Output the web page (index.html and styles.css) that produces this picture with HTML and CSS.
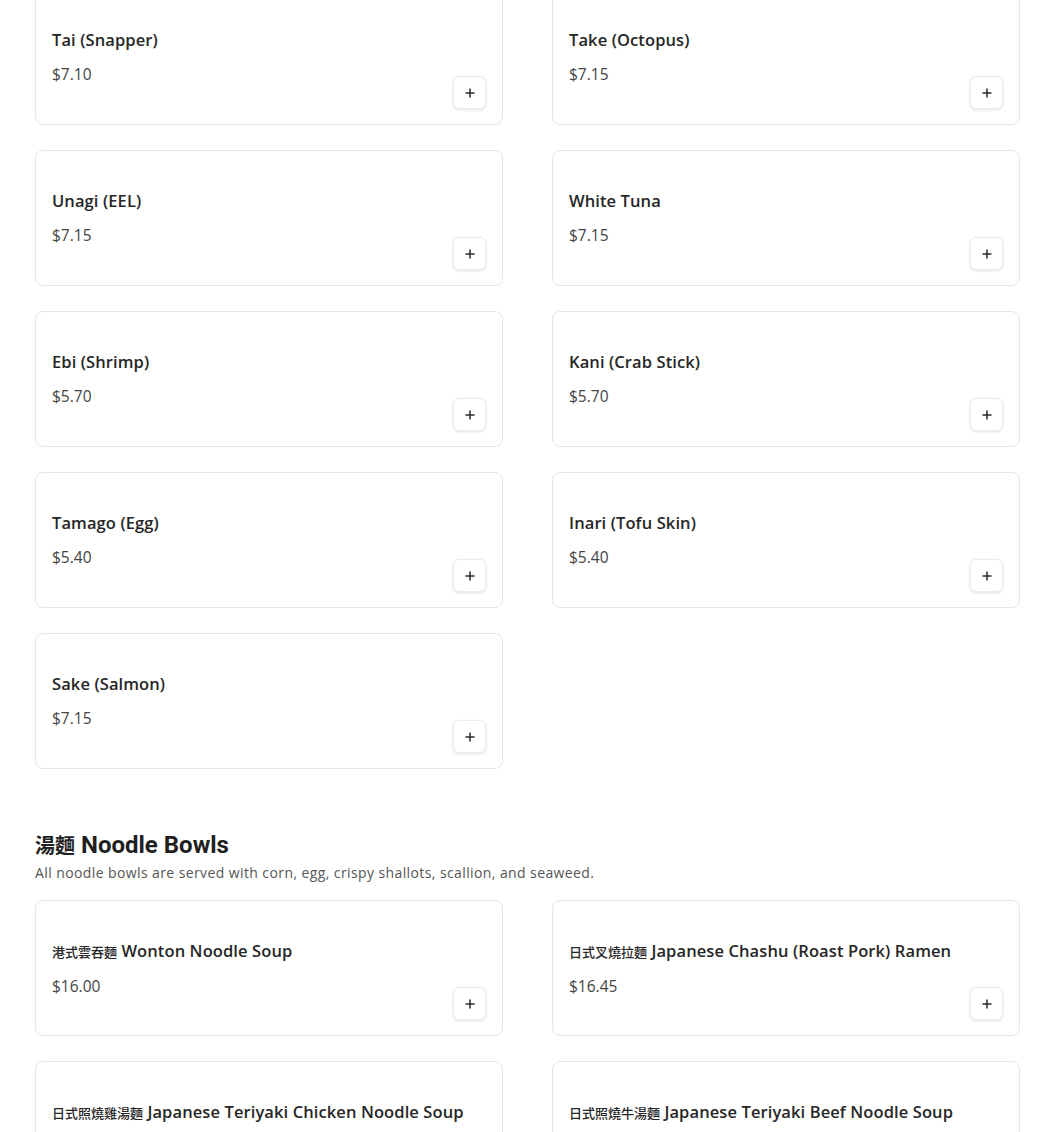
FILE: index.html
```html
<!DOCTYPE html>
<html lang="en">
<head>
<meta charset="utf-8">
<title>Menu</title>
<link rel="stylesheet" href="styles.css">
</head>
<body>
<main class="menu">
  <section class="section first">
    <div class="grid">
      <div class="card"><div class="info"><h3 class="name">Tai (Snapper)</h3><p class="price">$7.10</p></div><button class="add" aria-label="Add"><svg viewBox="0 0 12 12" width="12" height="12"><path d="M6 1.5v9M1.5 6h9" stroke="#2a2a2a" stroke-width="1.5" fill="none"/></svg></button></div>
      <div class="card"><div class="info"><h3 class="name">Take (Octopus)</h3><p class="price">$7.15</p></div><button class="add" aria-label="Add"><svg viewBox="0 0 12 12" width="12" height="12"><path d="M6 1.5v9M1.5 6h9" stroke="#2a2a2a" stroke-width="1.5" fill="none"/></svg></button></div>
      <div class="card"><div class="info"><h3 class="name">Unagi (EEL)</h3><p class="price">$7.15</p></div><button class="add" aria-label="Add"><svg viewBox="0 0 12 12" width="12" height="12"><path d="M6 1.5v9M1.5 6h9" stroke="#2a2a2a" stroke-width="1.5" fill="none"/></svg></button></div>
      <div class="card"><div class="info"><h3 class="name">White Tuna</h3><p class="price">$7.15</p></div><button class="add" aria-label="Add"><svg viewBox="0 0 12 12" width="12" height="12"><path d="M6 1.5v9M1.5 6h9" stroke="#2a2a2a" stroke-width="1.5" fill="none"/></svg></button></div>
      <div class="card"><div class="info"><h3 class="name">Ebi (Shrimp)</h3><p class="price">$5.70</p></div><button class="add" aria-label="Add"><svg viewBox="0 0 12 12" width="12" height="12"><path d="M6 1.5v9M1.5 6h9" stroke="#2a2a2a" stroke-width="1.5" fill="none"/></svg></button></div>
      <div class="card"><div class="info"><h3 class="name">Kani (Crab Stick)</h3><p class="price">$5.70</p></div><button class="add" aria-label="Add"><svg viewBox="0 0 12 12" width="12" height="12"><path d="M6 1.5v9M1.5 6h9" stroke="#2a2a2a" stroke-width="1.5" fill="none"/></svg></button></div>
      <div class="card"><div class="info"><h3 class="name">Tamago (Egg)</h3><p class="price">$5.40</p></div><button class="add" aria-label="Add"><svg viewBox="0 0 12 12" width="12" height="12"><path d="M6 1.5v9M1.5 6h9" stroke="#2a2a2a" stroke-width="1.5" fill="none"/></svg></button></div>
      <div class="card"><div class="info"><h3 class="name">Inari (Tofu Skin)</h3><p class="price">$5.40</p></div><button class="add" aria-label="Add"><svg viewBox="0 0 12 12" width="12" height="12"><path d="M6 1.5v9M1.5 6h9" stroke="#2a2a2a" stroke-width="1.5" fill="none"/></svg></button></div>
      <div class="card"><div class="info"><h3 class="name">Sake (Salmon)</h3><p class="price">$7.15</p></div><button class="add" aria-label="Add"><svg viewBox="0 0 12 12" width="12" height="12"><path d="M6 1.5v9M1.5 6h9" stroke="#2a2a2a" stroke-width="1.5" fill="none"/></svg></button></div>
    </div>
  </section>

  <section class="section">
    <h2 class="section-title"><span class="cjk">湯麵</span> Noodle Bowls</h2>
    <p class="section-desc">All noodle bowls are served with corn, egg, crispy shallots, scallion, and seaweed.</p>
    <div class="grid">
      <div class="card"><div class="info"><h3 class="name"><span class="cjk">港式雲吞麵</span> Wonton Noodle Soup</h3><p class="price">$16.00</p></div><button class="add" aria-label="Add"><svg viewBox="0 0 12 12" width="12" height="12"><path d="M6 1.5v9M1.5 6h9" stroke="#2a2a2a" stroke-width="1.5" fill="none"/></svg></button></div>
      <div class="card"><div class="info"><h3 class="name"><span class="cjk">日式叉燒拉麵</span> Japanese Chashu (Roast Pork) Ramen</h3><p class="price">$16.45</p></div><button class="add" aria-label="Add"><svg viewBox="0 0 12 12" width="12" height="12"><path d="M6 1.5v9M1.5 6h9" stroke="#2a2a2a" stroke-width="1.5" fill="none"/></svg></button></div>
      <div class="card"><div class="info"><h3 class="name"><span class="cjk">日式照燒雞湯麵</span> Japanese Teriyaki Chicken Noodle Soup</h3><p class="price">$16.45</p></div><button class="add" aria-label="Add"><svg viewBox="0 0 12 12" width="12" height="12"><path d="M6 1.5v9M1.5 6h9" stroke="#2a2a2a" stroke-width="1.5" fill="none"/></svg></button></div>
      <div class="card"><div class="info"><h3 class="name"><span class="cjk">日式照燒牛湯麵</span> Japanese Teriyaki Beef Noodle Soup</h3><p class="price">$16.45</p></div><button class="add" aria-label="Add"><svg viewBox="0 0 12 12" width="12" height="12"><path d="M6 1.5v9M1.5 6h9" stroke="#2a2a2a" stroke-width="1.5" fill="none"/></svg></button></div>
    </div>
  </section>
</main>
</body>
</html>
```
FILE: styles.css
```css
* { box-sizing: border-box; }

html, body {
  margin: 0;
  padding: 0;
  background: #ffffff;
}

body {
  font-family: "Open Sans", "Noto Sans", sans-serif;
  color: #1a1a1a;
  overflow: hidden;
}

.menu {
  width: 985px;
  margin: -11px 0 0 35px;
}

.section + .section {
  margin-top: 62px;
}

.grid {
  display: grid;
  grid-template-columns: 468px 468px;
  column-gap: 49px;
  row-gap: 25px;
}

.card {
  height: 136px;
  border: 1px solid #e6e6e6;
  border-radius: 8px;
  background: #fff;
  padding: 16px 16px 15px 16px;
  display: flex;
  justify-content: space-between;
  align-items: flex-end;
}

.info {
  align-self: flex-start;
  flex: 1;
  min-width: 0;
  padding-top: 22px;
}

.name {
  margin: 0;
  font-size: 16.5px;
  line-height: 24px;
  font-weight: 600;
  color: #262626;
  letter-spacing: 0.1px;
  white-space: nowrap;
}

.price {
  margin: 11px 0 0 0;
  font-size: 15.5px;
  line-height: 22px;
  font-weight: 400;
  color: #444;
}

.cjk {
  font-family: "Noto Sans CJK TC", "Noto Sans CJK SC", sans-serif;
  font-size: 13px;
  font-weight: 500;
  letter-spacing: 0;
}

.add {
  flex: none;
  width: 33px;
  height: 33px;
  padding: 0;
  border: 1px solid #ececec;
  border-radius: 6px;
  background: #fff;
  box-shadow: 0 1px 3px rgba(0, 0, 0, 0.12);
  display: flex;
  align-items: center;
  justify-content: center;
  cursor: pointer;
}

.add svg { display: block; }

.section-title {
  margin: 0;
  font-family: Roboto, "Noto Sans", sans-serif;
  font-size: 24px;
  line-height: 28px;
  font-weight: 700;
  color: #1f1f1f;
}

.section-title .cjk {
  font-size: 20px;
  font-weight: 700;
}

.section-desc {
  margin: 4px 0 17px 0;
  font-size: 14px;
  line-height: 20px;
  color: #555;
  letter-spacing: 0.4px;
}
```
